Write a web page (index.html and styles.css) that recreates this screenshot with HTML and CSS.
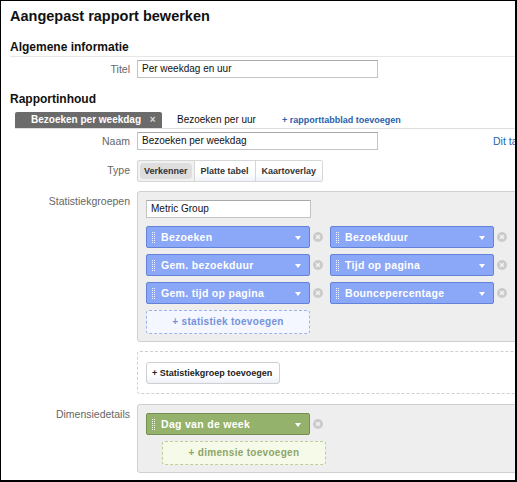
FILE: index.html
```html
<!DOCTYPE html>
<html>
<head>
<meta charset="utf-8">
<link rel="stylesheet" href="styles.css">
</head>
<body>
<div class="frame">
  <h1 class="title">Aangepast rapport bewerken</h1>
  <h2 class="section underline">Algemene informatie</h2>
  <div class="row row-title">
    <label class="lbl">Titel</label>
    <div class="field"><div class="input wide">Per weekdag en uur</div></div>
  </div>

  <h2 class="section section-2">Rapportinhoud</h2>
  <div class="tabs">
    <div class="tab active">Bezoeken per weekdag <span class="x">×</span></div>
    <div class="tab">Bezoeken per uur</div>
    <a class="tab add">+ rapporttabblad toevoegen</a>
  </div>

  <div class="row row-name">
    <label class="lbl">Naam</label>
    <div class="field"><div class="input wide">Bezoeken per weekdag</div><a class="del">Dit tabblad verwijderen</a></div>
  </div>

  <div class="row row-type">
    <label class="lbl lbl-type">Type</label>
    <div class="field">
      <div class="seg">
        <span class="btn on">Verkenner</span>
        <span class="btn">Platte tabel</span>
        <span class="btn last">Kaartoverlay</span>
      </div>
    </div>
  </div>

  <div class="row row-panel">
    <label class="lbl lbl-top">Statistiekgroepen</label>
    <div class="panel">
      <div class="input group">Metric Group</div>
      <div class="chips">
        <div class="cell"><div class="chip"><span class="grip"></span><span class="name">Bezoeken</span><span class="arrow"></span></div><svg class="rm" width="10" height="10" viewBox="0 0 10 10"><circle cx="5" cy="5" r="5" fill="#cbcbcb"/><path d="M3.2 3.2L6.8 6.8M6.8 3.2L3.2 6.8" stroke="#f4f4f4" stroke-width="1.3"/></svg></div>
        <div class="cell"><div class="chip"><span class="grip"></span><span class="name">Bezoekduur</span><span class="arrow"></span></div><svg class="rm" width="10" height="10" viewBox="0 0 10 10"><circle cx="5" cy="5" r="5" fill="#cbcbcb"/><path d="M3.2 3.2L6.8 6.8M6.8 3.2L3.2 6.8" stroke="#f4f4f4" stroke-width="1.3"/></svg></div>
        <div class="cell"><div class="chip"><span class="grip"></span><span class="name">Gem. bezoekduur</span><span class="arrow"></span></div><svg class="rm" width="10" height="10" viewBox="0 0 10 10"><circle cx="5" cy="5" r="5" fill="#cbcbcb"/><path d="M3.2 3.2L6.8 6.8M6.8 3.2L3.2 6.8" stroke="#f4f4f4" stroke-width="1.3"/></svg></div>
        <div class="cell"><div class="chip"><span class="grip"></span><span class="name">Tijd op pagina</span><span class="arrow"></span></div><svg class="rm" width="10" height="10" viewBox="0 0 10 10"><circle cx="5" cy="5" r="5" fill="#cbcbcb"/><path d="M3.2 3.2L6.8 6.8M6.8 3.2L3.2 6.8" stroke="#f4f4f4" stroke-width="1.3"/></svg></div>
        <div class="cell"><div class="chip"><span class="grip"></span><span class="name">Gem. tijd op pagina</span><span class="arrow"></span></div><svg class="rm" width="10" height="10" viewBox="0 0 10 10"><circle cx="5" cy="5" r="5" fill="#cbcbcb"/><path d="M3.2 3.2L6.8 6.8M6.8 3.2L3.2 6.8" stroke="#f4f4f4" stroke-width="1.3"/></svg></div>
        <div class="cell"><div class="chip"><span class="grip"></span><span class="name">Bouncepercentage</span><span class="arrow"></span></div><svg class="rm" width="10" height="10" viewBox="0 0 10 10"><circle cx="5" cy="5" r="5" fill="#cbcbcb"/><path d="M3.2 3.2L6.8 6.8M6.8 3.2L3.2 6.8" stroke="#f4f4f4" stroke-width="1.3"/></svg></div>
      </div>
      <div class="addbox blue">+ statistiek toevoegen</div>
    </div>
  </div>

  <div class="row row-dashed">
    <span class="lbl"></span>
    <div class="dashed"><span class="plainbtn">+ Statistiekgroep toevoegen</span></div>
  </div>

  <div class="row row-dim">
    <label class="lbl lbl-top">Dimensiedetails</label>
    <div class="panel dimpanel">
      <div class="cell"><div class="chip green"><span class="grip"></span><span class="name">Dag van de week</span><span class="arrow"></span></div><svg class="rm" width="10" height="10" viewBox="0 0 10 10"><circle cx="5" cy="5" r="5" fill="#cbcbcb"/><path d="M3.2 3.2L6.8 6.8M6.8 3.2L3.2 6.8" stroke="#f4f4f4" stroke-width="1.3"/></svg></div>
      <div class="addbox greenbox">+ dimensie toevoegen</div>
    </div>
  </div>
</div>
</body>
</html>
```

FILE: styles.css
```css
html, body {
  margin: 0;
  padding: 0;
  background: #fff;
}
body {
  font-family: "Liberation Sans", Arial, sans-serif;
  color: #222;
}
.frame {
  box-sizing: border-box;
  width: 517px;
  height: 482px;
  border: 1px solid #000;
  border-right-width: 2px;
  border-bottom-width: 2px;
  padding-left: 9px;
  overflow: hidden;
  background: #fff;
}
.title {
  margin: 6px 0 0;
  font-size: 14.5px;
  line-height: 18px;
  font-weight: bold;
  color: #111;
}
.section {
  margin: 15px 0 0;
  font-size: 12px;
  line-height: 15px;
  font-weight: bold;
  color: #111;
}
.underline {
  padding-bottom: 1px;
  border-bottom: 1px solid #e6e6e6;
}
.section-2 {
  margin-top: 14px;
}
.row {
  display: grid;
  grid-template-columns: 120px 1fr;
  column-gap: 7px;
}
.row-title { margin-top: 3px; }
.row-name { margin-top: 3px; }
.row-type { margin-top: 10px; }
.row-panel { margin-top: 9px; }
.row-dashed { margin-top: 9px; }
.row-dim { margin-top: 10px; }
.lbl {
  text-align: right;
  font-size: 10.5px;
  line-height: 18px;
  color: #666;
}
.lbl-type { line-height: 20px; }
.lbl-top { padding-top: 3px; line-height: 14px; }
.field {
  display: flex;
  align-items: center;
  white-space: nowrap;
}
.input {
  box-sizing: border-box;
  height: 18px;
  border: 1px solid #c4c4c4;
  border-top-color: #a9a9a9;
  background: #fff;
  font-size: 10px;
  line-height: 16px;
  padding-left: 4px;
  color: #111;
}
.wide { width: 241px; }
.del {
  margin-left: 115px;
  font-size: 10.5px;
  color: #2464b0;
}
.tabs {
  display: flex;
  align-items: flex-end;
  margin: 5px 0 0 5px;
  height: 16px;
  border-bottom: 1px solid #dedede;
  white-space: nowrap;
}
.tab {
  height: 16px;
  font-size: 10px;
  line-height: 16px;
  color: #111;
}
.tab.active {
  box-sizing: border-box;
  width: 147px;
  padding-left: 16px;
  background: #6b6b6b;
  color: #fff;
  font-weight: bold;
  border-radius: 2px 2px 0 0;
  margin-right: 15px;
}
.tab.active .x {
  margin-left: 6px;
  color: #d8d8d8;
  font-weight: bold;
}
.tab.add {
  margin-left: 26px;
  font-size: 9px;
  font-weight: bold;
  color: #2a62ad;
}
.seg {
  display: flex;
  height: 22px;
  box-sizing: border-box;
  border: 1px solid #d6d6d6;
  border-radius: 2px;
  background: #f1f1f1;
}
.btn {
  display: flex;
  align-items: center;
  padding: 0 6px;
  font-size: 9px;
  font-weight: bold;
  color: #333;
  background: linear-gradient(#fff, #fff 60%, #eef2f8);
  border-left: 1px solid #d6d6d6;
}
.btn.on {
  border-left: 0;
  margin: 2px;
  padding: 0 4px;
  background: #dedede;
  border-radius: 4px;
}
.panel {
  box-sizing: border-box;
  margin-right: -20px;
  border: 1px solid #cfcfcf;
  border-radius: 3px;
  background: #eeeeee;
  padding: 8px 8px 7px;
}
.group {
  width: 165px;
}
.chips {
  margin-top: 8px;
  display: grid;
  grid-template-columns: 184px 184px;
  row-gap: 6px;
}
.cell {
  display: flex;
  align-items: center;
}
.chip {
  box-sizing: border-box;
  width: 164px;
  height: 22px;
  display: flex;
  align-items: center;
  padding-left: 5px;
  padding-right: 8px;
  background: #8ba7f7;
  border: 1px solid #6382d8;
  border-radius: 2px;
  color: #fff;
}
.chip.green {
  background: #95b26c;
  border-color: #768f50;
}
.grip {
  width: 4px;
  height: 11px;
  margin-right: 5px;
  background: conic-gradient(at 1px 1px, transparent 75%, rgba(255,255,255,.9) 0) 0 0 / 2px 2px;
}
.name {
  flex: 1;
  font-size: 10.5px;
  font-weight: bold;
  letter-spacing: 0.3px;
  white-space: nowrap;
}
.arrow {
  width: 0;
  height: 0;
  margin-top: 2px;
  border-left: 3.5px solid transparent;
  border-right: 3.5px solid transparent;
  border-top: 4px solid #fff;
}
.rm {
  margin-left: 3px;
  display: block;
}
.addbox {
  box-sizing: border-box;
  width: 164px;
  height: 24px;
  margin-top: 6px;
  border: 1px dashed #9fb3e6;
  border-radius: 3px;
  background: #f4f7ff;
  text-align: center;
  font-size: 10px;
  line-height: 22px;
  font-weight: bold;
  letter-spacing: 0.3px;
  color: #7592da;
}
.greenbox {
  margin-left: 16px;
  border-color: #bccf95;
  background: #f5fbe8;
  color: #8fa46b;
}
.dashed {
  box-sizing: border-box;
  margin-right: -20px;
  border: 1px dashed #cfcfcf;
  border-radius: 3px;
  padding: 10px 8px 9px;
}
.plainbtn {
  box-sizing: border-box;
  display: inline-flex;
  align-items: center;
  height: 22px;
  width: 134px;
  padding-left: 5px;
  border: 1px solid #cfcfcf;
  border-radius: 3px;
  background: linear-gradient(#fff, #fff 55%, #edf1f8);
  font-size: 9px;
  font-weight: bold;
  color: #222;
  white-space: nowrap;
}
```
